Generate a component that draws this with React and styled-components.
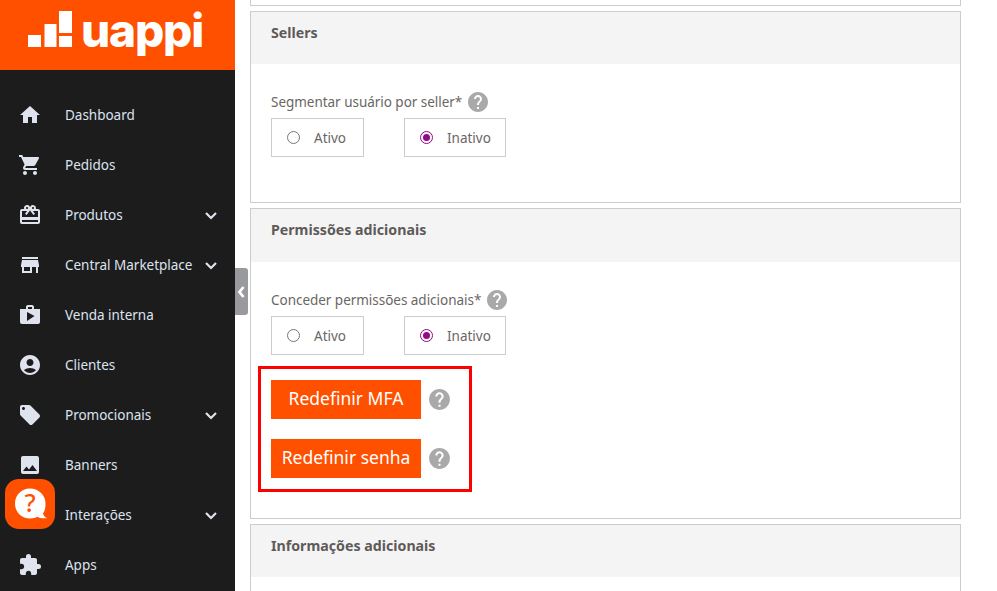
import React from "react";
import styled, { createGlobalStyle } from "styled-components";
import {
  MdHome,
  MdShoppingCart,
  MdCardGiftcard,
  MdStore,
  MdShop,
  MdAccountCircle,
  MdLocalOffer,
  MdImage,
  MdExtension,
  MdHelp,
} from "react-icons/md";

const GlobalStyle = createGlobalStyle`
  html, body {
    margin: 0;
    height: 100%;
    overflow: hidden;
    background: #fff;
  }
  body {
    font-family: "Noto Sans", "Open Sans", sans-serif;
  }
  * {
    box-sizing: border-box;
  }
`;

const Page = styled.div`
  position: relative;
  display: flex;
  width: 997px;
  height: 591px;
  overflow: hidden;
`;

const Sidebar = styled.aside`
  flex: 0 0 235px;
  height: 100%;
  background: #1c1c1c;
  overflow: hidden;
`;

const Brand = styled.div`
  display: flex;
  align-items: flex-start;
  height: 70px;
  padding: 11px 0 0 28px;
  background: #ff5000;
`;

const LogoText = styled.span`
  margin: -7px 0 0 9px;
  color: #fff;
  font-family: "Inter", sans-serif;
  font-size: 46px;
  font-weight: 800;
  line-height: 53px;
  letter-spacing: -1.2px;
`;

const Menu = styled.nav`
  display: flex;
  flex-direction: column;
  padding-top: 20px;
`;

const MenuItem = styled.a`
  display: flex;
  align-items: center;
  height: 50px;
  padding: 0 17px 0 18px;
  color: #dde3f0;
  font-size: 13.5px;
  letter-spacing: -0.02px;

  svg.menu-icon {
    flex: 0 0 24px;
    margin-right: 23px;
    font-size: 24px;
    color: #dfe3ee;
  }
  svg.arrow {
    margin-left: auto;
    color: #dfe3ee;
  }
`;

const CollapseTab = styled.button`
  position: absolute;
  top: 268px;
  left: 235px;
  display: flex;
  align-items: center;
  justify-content: flex-start;
  width: 13px;
  height: 47px;
  padding: 0 0 0 2px;
  border: none;
  border-radius: 0 3px 3px 0;
  background: #999a9e;
  color: #fff;
  overflow: hidden;
`;

const HelpFab = styled.div`
  position: absolute;
  top: 479px;
  left: 5px;
  display: flex;
  align-items: center;
  justify-content: center;
  width: 50px;
  height: 50px;
  border-radius: 14px;
  background: #ff5000;
`;

const Content = styled.main`
  flex: 0 0 711px;
  display: flex;
  flex-direction: column;
  gap: 5px;
  margin-left: 15px;
`;

const Card = styled.section`
  flex: none;
  height: ${(props) => props.$height}px;
  border: 1px solid #ccc;
  border-top: ${(props) => (props.$clipped ? "none" : "1px solid #ccc")};
  background: #fff;
`;

const CardHeader = styled.h2`
  display: flex;
  align-items: center;
  height: ${(props) => props.$height || 52}px;
  margin: 0;
  padding: 0 20px ${(props) => (props.$height ? 13 : 11)}px;
  background: #f4f4f4;
  color: #5f5a58;
  font-size: 14.2px;
  font-weight: 700;
`;

const CardBody = styled.div`
  padding: 27px 20px 0;
`;

const FieldLabel = styled.div`
  display: flex;
  align-items: center;
  height: 22px;
  color: #6a6664;
  font-size: 13.5px;
  letter-spacing: -0.03px;

  svg {
    margin-left: 4px;
    font-size: 24px;
    color: #a9a9a9;
  }
`;

const RadioRow = styled.div`
  display: flex;
  gap: 40px;
  margin-top: 5px;
`;

const RadioBox = styled.label`
  display: flex;
  align-items: center;
  gap: 14px;
  width: ${(props) => props.$width}px;
  height: 39px;
  padding-left: 15px;
  border: 1px solid #ccc;
  color: #6a6664;
  font-size: 13.5px;
`;

const RadioDot = styled.span`
  position: relative;
  flex: none;
  width: 13px;
  height: 13px;
  border: 1px solid ${(props) => (props.$checked ? "#920a85" : "#777")};
  border-radius: 50%;
  background: #fff;

  &::after {
    content: "";
    display: ${(props) => (props.$checked ? "block" : "none")};
    position: absolute;
    inset: 2px;
    border-radius: 50%;
    background: #920a85;
  }
`;

const ActionsFrame = styled.div`
  display: flex;
  flex-direction: column;
  gap: 20px;
  width: 214px;
  height: 126px;
  margin: 11px 0 0 -13px;
  padding: 11px 0 0 10px;
  border: 3px solid #f00;
`;

const ActionRow = styled.div`
  display: flex;
  align-items: center;
  gap: 6px;

  svg {
    font-size: 25px;
    color: #a9a9a9;
  }
`;

const ActionButton = styled.button`
  width: 150px;
  height: 39px;
  padding: 0 0 3px;
  border: none;
  background: #ff5000;
  color: #fff;
  font-family: inherit;
  font-size: 17.5px;
`;

const menuItems = [
  { label: "Dashboard", icon: MdHome },
  { label: "Pedidos", icon: MdShoppingCart },
  { label: "Produtos", icon: MdCardGiftcard, arrow: true },
  { label: "Central Marketplace", icon: MdStore, arrow: true },
  { label: "Venda interna", icon: MdShop },
  { label: "Clientes", icon: MdAccountCircle },
  { label: "Promocionais", icon: MdLocalOffer, arrow: true },
  { label: "Banners", icon: MdImage },
  { label: "Interações", icon: MdCardGiftcard, arrow: true },
  { label: "Apps", icon: MdExtension },
];

const LogoMark = () => (
  <svg width="44" height="36" viewBox="0 0 44 36" fill="#fff">
    <rect x="0" y="24" width="13" height="12" />
    <rect x="16.5" y="13" width="12" height="23" />
    <rect x="31" y="0" width="13" height="22" />
    <rect x="31" y="25" width="13" height="11" />
  </svg>
);

const ArrowDown = () => (
  <svg className="arrow" width="14" height="9" viewBox="0 0 14 9" fill="none">
    <polyline points="2,2 7,7 12,2" stroke="currentColor" strokeWidth="2.2" />
  </svg>
);

const ArrowLeft = () => (
  <svg width="9" height="14" viewBox="0 0 9 14" fill="none">
    <polyline points="6.500,2 2.500,7 6.500,12" stroke="currentColor" strokeWidth="2.8" />
  </svg>
);

const HelpBubble = () => (
  <svg width="40" height="40" viewBox="0 0 40 40">
    <path
      fill="#fff"
      d="M20 4.500C11 4.500 5 11.500 5 19.500S11 34.500 20 34.500c3 0 5.500-.7 7.500-1.700 2.500 1.400 5 1.700 9.500 1.400-2.300-1-3.600-2.700-4-4.900C35 27 35.500 23.500 35.500 19.500 35.500 11.500 29 4.500 20 4.500z"
    />
    <text
      x="20"
      y="28"
      fill="#ff5000"
      fontFamily="Noto Sans, sans-serif"
      fontSize="25"
      fontWeight="500"
      textAnchor="middle"
    >
      ?
    </text>
  </svg>
);

const RadioGroup = () => (
  <RadioRow>
    <RadioBox $width={93}>
      <RadioDot />
      Ativo
    </RadioBox>
    <RadioBox $width={102}>
      <RadioDot $checked />
      Inativo
    </RadioBox>
  </RadioRow>
);

const App = () => {
  return (
    <Page>
      <GlobalStyle />
      <Sidebar>
        <Brand>
          <LogoMark />
          <LogoText>uappi</LogoText>
        </Brand>
        <Menu>
          {menuItems.map(({ label, icon: Icon, arrow }) => (
            <MenuItem key={label}>
              <Icon className="menu-icon" />
              {label}
              {arrow && <ArrowDown />}
            </MenuItem>
          ))}
        </Menu>
      </Sidebar>

      <CollapseTab aria-label="Recolher menu">
        <ArrowLeft />
      </CollapseTab>
      <HelpFab>
        <HelpBubble />
      </HelpFab>

      <Content>
        <Card $height={6} $clipped />
        <Card $height={192}>
          <CardHeader>Sellers</CardHeader>
          <CardBody>
            <FieldLabel>
              Segmentar usuário por seller*
              <MdHelp />
            </FieldLabel>
            <RadioGroup />
          </CardBody>
        </Card>
        <Card $height={311}>
          <CardHeader $height={53}>Permissões adicionais</CardHeader>
          <CardBody>
            <FieldLabel>
              Conceder permissões adicionais*
              <MdHelp />
            </FieldLabel>
            <RadioGroup />
            <ActionsFrame>
              <ActionRow>
                <ActionButton>Redefinir MFA</ActionButton>
                <MdHelp />
              </ActionRow>
              <ActionRow>
                <ActionButton>Redefinir senha</ActionButton>
                <MdHelp />
              </ActionRow>
            </ActionsFrame>
          </CardBody>
        </Card>
        <Card $height={100}>
          <CardHeader>Informações adicionais</CardHeader>
        </Card>
      </Content>
    </Page>
  );
};

export default App;
